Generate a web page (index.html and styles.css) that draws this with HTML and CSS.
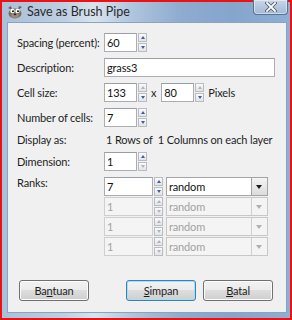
FILE: index.html
```html
<!DOCTYPE html>
<html lang="id">
<head>
  <meta charset="UTF-8">
  <meta name="viewport" content="width=device-width, initial-scale=1.0">
  <title>Save as Brush Pipe</title>
  <link rel="stylesheet" href="styles.css">
</head>
<body>

  <div class="window">
    <!-- Barra de título -->
    <div class="titlebar">
      <svg class="app-icon" width="16" height="14" viewBox="0 0 16 14">
        <path d="M1 3 L4 1 L5 5 Z" fill="#6b5e4c"/>
        <path d="M15 2 L12 1 L11 5 Z" fill="#6b5e4c"/>
        <ellipse cx="8" cy="8.5" rx="6.5" ry="5" fill="#7a6e5c"/>
        <ellipse cx="8" cy="10.5" rx="4" ry="2.5" fill="#9a8d78"/>
        <circle cx="5.5" cy="6" r="2.2" fill="#fff"/>
        <circle cx="10.5" cy="6" r="2.2" fill="#fff"/>
        <circle cx="6" cy="6.3" r="1" fill="#111"/>
        <circle cx="11" cy="6.3" r="1" fill="#111"/>
        <ellipse cx="8" cy="9.3" rx="1.3" ry="0.9" fill="#222"/>
      </svg>
      <span class="title-text">Save as Brush Pipe</span>
      <div class="close-btn">
        <svg width="12" height="10" viewBox="0 0 12 10">
          <path d="M2 1 L10 9 M10 1 L2 9" stroke="#4a5a70" stroke-width="3.4" stroke-linecap="square"/>
          <path d="M2 1 L10 9 M10 1 L2 9" stroke="#ffffff" stroke-width="1.8" stroke-linecap="square"/>
        </svg>
      </div>
    </div>

    <!-- Área do diálogo -->
    <div class="client">
      <div class="form">
        <div class="row">
          <span class="label">Spacing (percent):</span>
          <span class="entry w-small">60</span>
          <span class="spin"><span class="up"></span><span class="down"></span></span>
        </div>

        <div class="row">
          <span class="label">Description:</span>
          <span class="entry w-long">grass3</span>
        </div>

        <div class="row">
          <span class="label">Cell size:</span>
          <span class="entry w-small">133</span>
          <span class="spin"><span class="up off"></span><span class="down"></span></span>
          <span class="times">x</span>
          <span class="entry w-small">80</span>
          <span class="spin"><span class="up off"></span><span class="down"></span></span>
          <span class="unit">Pixels</span>
        </div>

        <div class="row">
          <span class="label">Number of cells:</span>
          <span class="entry w-small">7</span>
          <span class="spin"><span class="up"></span><span class="down"></span></span>
        </div>

        <div class="row row-text">
          <span class="label">Display as:</span>
          <span class="info">1 Rows of&nbsp; 1 Columns on each layer</span>
        </div>

        <div class="row">
          <span class="label">Dimension:</span>
          <span class="entry w-small">1</span>
          <span class="spin"><span class="up"></span><span class="down off"></span></span>
        </div>

        <div class="ranks">
          <span class="label label-top">Ranks:</span>
          <div class="rank-list">
            <div class="rank">
              <span class="entry w-rank">7</span>
              <span class="spin"><span class="up"></span><span class="down"></span></span>
              <div class="combo"><span class="combo-text">random</span><span class="drop"></span></div>
            </div>
            <div class="rank disabled">
              <span class="entry w-rank">1</span>
              <span class="spin"><span class="up off"></span><span class="down off"></span></span>
              <div class="combo"><span class="combo-text">random</span><span class="drop"></span></div>
            </div>
            <div class="rank disabled">
              <span class="entry w-rank">1</span>
              <span class="spin"><span class="up off"></span><span class="down off"></span></span>
              <div class="combo"><span class="combo-text">random</span><span class="drop"></span></div>
            </div>
            <div class="rank disabled">
              <span class="entry w-rank">1</span>
              <span class="spin"><span class="up off"></span><span class="down off"></span></span>
              <div class="combo"><span class="combo-text">random</span><span class="drop"></span></div>
            </div>
          </div>
        </div>
      </div>

      <!-- Botões -->
      <div class="buttons">
        <button class="btn">Ba<u>n</u>tuan</button>
        <span class="spacer"></span>
        <button class="btn btn-default"><u>S</u>impan</button>
        <button class="btn"><u>B</u>atal</button>
      </div>
    </div>
  </div>

</body>
</html>
```

FILE: styles.css
```css
/* Corpo da página */
body {
  margin: 0;
  font-family: Lato, "Open Sans", sans-serif;
  font-size: 11px;
  letter-spacing: -0.15px;
  color: #1e1e1e;
  white-space: nowrap;
}

/* Janela com moldura */
.window {
  width: 292px;
  height: 320px;
  box-sizing: border-box;
  border: 2px solid #ee1111;
  background: linear-gradient(90deg, #a9bfda 0%, #bfcfe3 22%, #d9e3ee 32%, #b0c5de 45%, #8eabd0 62%, #86a5cd 80%, #8eaed6 100%);
  display: flex;
  flex-direction: column;
}

/* Barra de título */
.titlebar {
  height: 20px;
  display: flex;
  align-items: center;
  position: relative;
}

.app-icon {
  margin-left: 5px;
  margin-top: -1px;
}

.title-text {
  margin-left: 4px;
  font-size: 12.5px;
  letter-spacing: 0;
  color: #2a2a2a;
  margin-top: -2px;
}

.close-btn {
  position: absolute;
  top: -2px;
  right: 2px;
  width: 35px;
  height: 15px;
  box-sizing: border-box;
  border: 1px solid #5a7192;
  border-top: none;
  border-radius: 0 0 4px 4px;
  background: linear-gradient(#c8d5e6, #a3b9d6);
  box-shadow: inset 0 0 0 1px rgba(255, 255, 255, 0.45);
  display: flex;
  align-items: center;
  justify-content: center;
}

/* Área cliente do diálogo */
.client {
  margin: 0 3px 5px 5px;
  flex: 1;
  background-color: #f0f0f0;
  border: 1px solid #8aa3c2;
  box-sizing: border-box;
  padding: 10px 0 0 9px;
  display: flex;
  flex-direction: column;
}

.form {
  display: flex;
  flex-direction: column;
  gap: 6px;
}

.row {
  display: flex;
  align-items: center;
  height: 19px;
}

.row-text {
  height: 13px;
}

.label {
  width: 87px;
  flex-shrink: 0;
}

/* Campos de texto */
.entry {
  height: 19px;
  box-sizing: border-box;
  border: 1px solid #abadb3;
  border-top-color: #9a9ea6;
  background: #ffffff;
  padding: 0 0 0 2px;
  line-height: 17px;
  color: #111;
}

.w-small { width: 33px; }
.w-long { width: 171px; }
.w-rank { width: 49px; }

.times {
  margin: 0 5px 0 4px;
}

.unit {
  margin-left: 4px;
}

.info {
  padding-left: 2px;
}

/* Botões de incremento */
.spin {
  display: flex;
  flex-direction: column;
  margin-left: 1px;
  height: 19px;
  gap: 1px;
}

.spin .up,
.spin .down {
  width: 9px;
  height: 9px;
  box-sizing: border-box;
  border: 1px solid #b8bcc4;
  background: linear-gradient(#fafafa, #e4e4e4);
  position: relative;
}

.spin .up::after,
.spin .down::after {
  content: "";
  position: absolute;
  left: 2px;
  top: 2px;
  border-left: 2.5px solid transparent;
  border-right: 2.5px solid transparent;
}

.spin .up::after {
  border-bottom: 3px solid #3d5f9a;
}

.spin .down::after {
  border-top: 3px solid #3d5f9a;
}

.spin .off::after {
  border-bottom-color: #b4b4b4;
  border-top-color: #b4b4b4;
}

/* Linhas de ranks */
.ranks {
  display: flex;
}

.label-top {
  line-height: 14px;
  margin-top: -1px;
}

.rank-list {
  display: flex;
  flex-direction: column;
  gap: 1px;
}

.rank {
  display: flex;
  align-items: center;
  height: 19px;
}

.rank .spin {
  margin-left: 1px;
}

.combo {
  margin-left: 3px;
  width: 102px;
  height: 19px;
  box-sizing: border-box;
  border: 1px solid #a4a4a4;
  background: #ffffff;
  display: flex;
  align-items: center;
}

.combo-text {
  flex: 1;
  padding-left: 2px;
  color: #111;
}

.drop {
  width: 16px;
  height: 17px;
  box-sizing: border-box;
  border-left: 1px solid #a4a4a4;
  background: linear-gradient(#f4f4f4, #dcdcdc);
  position: relative;
}

.drop::after {
  content: "";
  position: absolute;
  left: 4px;
  top: 7px;
  border-left: 3.5px solid transparent;
  border-right: 3.5px solid transparent;
  border-top: 4px solid #1a1a1a;
}

/* Ranks desativados */
.disabled .entry {
  background: #f4f4f4;
  border-color: #cfcfcf;
  color: #a2a2a2;
}

.disabled .combo {
  background: #f4f4f4;
  border-color: #c8c8c8;
}

.disabled .combo-text {
  color: #a2a2a2;
}

.disabled .drop {
  background: #f4f4f4;
  border-left-color: #cfcfcf;
}

.disabled .drop::after {
  border-top-color: #b0b0b0;
}

/* Botões inferiores */
.buttons {
  display: flex;
  margin-top: 24px;
  padding-left: 2px;
  padding-right: 13px;
  gap: 7px;
}

.spacer {
  flex: 1;
}

.btn {
  width: 70px;
  height: 21px;
  font-family: Lato, "Open Sans", sans-serif;
  font-size: 11px;
  letter-spacing: -0.15px;
  color: #1e1e1e;
  border: 1px solid #707070;
  border-radius: 3px;
  background: linear-gradient(#f2f2f2 0%, #ebebeb 49%, #dddddd 50%, #cfcfcf 100%);
  box-shadow: inset 0 0 0 1px #fcfcfc;
  padding: 0;
}

.btn-default {
  border-color: #3c7fb1;
  box-shadow: inset 0 0 0 1px #9fe0fb;
}
```
